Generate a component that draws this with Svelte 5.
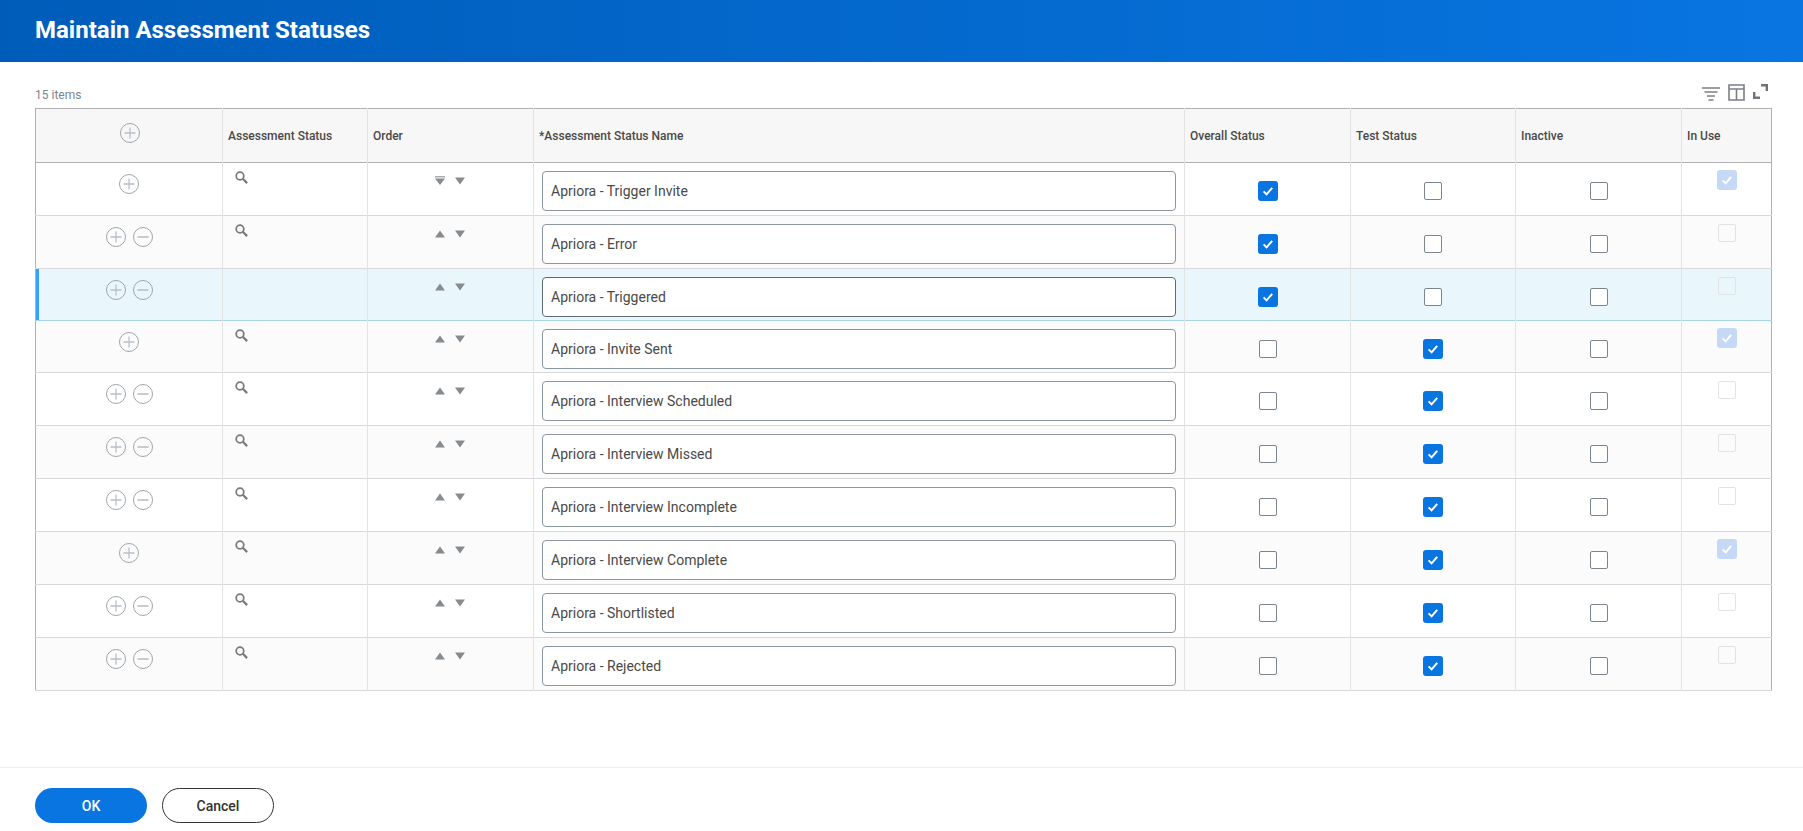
<script lang="ts">
type Row = {
	name: string;
	height: number;
	overall: boolean;
	test: boolean;
	used: boolean;
	search: boolean;
	first?: boolean;
	selected?: boolean;
};

const rows: Row[] = [
	{ name: "Apriora - Trigger Invite", height: 53, overall: true, test: false, used: true, search: true, first: true },
	{ name: "Apriora - Error", height: 53, overall: true, test: false, used: false, search: true },
	{ name: "Apriora - Triggered", height: 52, overall: true, test: false, used: false, search: false, selected: true },
	{ name: "Apriora - Invite Sent", height: 52, overall: false, test: true, used: true, search: true },
	{ name: "Apriora - Interview Scheduled", height: 53, overall: false, test: true, used: false, search: true },
	{ name: "Apriora - Interview Missed", height: 53, overall: false, test: true, used: false, search: true },
	{ name: "Apriora - Interview Incomplete", height: 53, overall: false, test: true, used: false, search: true },
	{ name: "Apriora - Interview Complete", height: 53, overall: false, test: true, used: true, search: true },
	{ name: "Apriora - Shortlisted", height: 53, overall: false, test: true, used: false, search: true },
	{ name: "Apriora - Rejected", height: 53, overall: false, test: true, used: false, search: true },
];
</script>

{#snippet plus()}
	<svg class="round" viewBox="0 0 20 20" width="20" height="20" aria-hidden="true">
		<circle cx="10" cy="10" r="9.5" fill="none" stroke="#a1a5a9" />
		<path d="M10 4.5v11M4.5 10h11" fill="none" stroke="#b9c0c7" stroke-width="1.3" />
	</svg>
{/snippet}

{#snippet minus()}
	<svg class="round" viewBox="0 0 20 20" width="20" height="20" aria-hidden="true">
		<circle cx="10" cy="10" r="9.5" fill="none" stroke="#a1a5a9" />
		<path d="M4.5 10h11" fill="none" stroke="#b9c0c7" stroke-width="1.6" />
	</svg>
{/snippet}

{#snippet check(kind: "on" | "off" | "used" | "blank")}
	{#if kind === "on" || kind === "used"}
		<span class="box {kind}">
			<svg viewBox="0 0 20 20" width="20" height="20" aria-hidden="true">
				<path d="M5.6 10.4l3 3 5.6-6.6" fill="none" stroke="#fff" stroke-width="2" />
			</svg>
		</span>
	{:else}
		<span class="box {kind}"></span>
	{/if}
{/snippet}

<div class="page">
	<header class="banner"><h1>Maintain Assessment Statuses</h1></header>

	<main>
		<div class="toolbar">
			<span class="count">15 items</span>
			<div class="tools">
				<svg class="filter" viewBox="0 0 18 14" width="18" height="14" aria-hidden="true">
					<path d="M0 1h18M2.5 5h13M5 9h8M6.5 13h5" fill="none" stroke="#7b7f84" stroke-width="1.6" />
				</svg>
				<svg viewBox="0 0 17 17" width="17" height="17" aria-hidden="true">
					<path d="M1 1h15v15H1zM1 5h15M8.5 5v11" fill="none" stroke="#7b7f84" stroke-width="1.6" />
				</svg>
				<svg viewBox="0 0 15 15" width="15" height="15" aria-hidden="true">
					<path d="M8 1.2h5.8V7M1.2 8v5.8H7" fill="none" stroke="#6f7378" stroke-width="2.4" />
				</svg>
			</div>
		</div>

		<table>
			<colgroup>
				<col class="c-add" />
				<col class="c-status" />
				<col class="c-order" />
				<col class="c-name" />
				<col class="c-overall" />
				<col class="c-test" />
				<col class="c-inactive" />
				<col class="c-use" />
			</colgroup>
			<thead>
				<tr>
					<th class="add-head">{@render plus()}</th>
					<th>Assessment Status</th>
					<th>Order</th>
					<th>*Assessment Status Name</th>
					<th>Overall Status</th>
					<th>Test Status</th>
					<th>Inactive</th>
					<th>In Use</th>
				</tr>
			</thead>
			<tbody>
				{#each rows as row}
					<tr class:selected={row.selected} style="height: {row.height}px">
						<td class="add">
							<div class="add-icons">
								{@render plus()}
								{#if !row.used}{@render minus()}{/if}
							</div>
						</td>
						<td class="search">
							{#if row.search}
								<svg viewBox="0 0 12 12" width="13" height="13" aria-hidden="true">
									<circle cx="4.6" cy="4.6" r="3.5" fill="none" stroke="#77797c" stroke-width="1.6" />
									<path d="M7.2 7.2l4 4" fill="none" stroke="#77797c" stroke-width="2" />
								</svg>
							{/if}
						</td>
						<td class="order">
							<div class="arrows">
								<svg viewBox="0 0 10 9" width="10" height="9" aria-hidden="true">
									{#if row.first}
										<path d="M0 0h10v1.5H0z" fill="#a9adb1" />
										<path d="M0 2.4h10L5 9z" fill="#868b90" />
									{:else}
										<path d="M5 1.5l5 7H0z" fill="#868b90" />
									{/if}
								</svg>
								<svg viewBox="0 0 10 9" width="10" height="9" aria-hidden="true">
									<path d="M0 1.5h10l-5 7z" fill="#868b90" />
								</svg>
							</div>
						</td>
						<td class="name"><input type="text" value={row.name} readonly /></td>
						<td class="tick">{@render check(row.overall ? "on" : "off")}</td>
						<td class="tick">{@render check(row.test ? "on" : "off")}</td>
						<td class="tick">{@render check("off")}</td>
						<td class="used">{@render check(row.used ? "used" : "blank")}</td>
					</tr>
				{/each}
			</tbody>
		</table>
	</main>

	<footer>
		<button type="button" class="primary">OK</button>
		<button type="button" class="secondary">Cancel</button>
	</footer>
</div>

<style>
	:global(body) {
		margin: 0;
		background: #fff;
		font-family: Roboto, "Liberation Sans", sans-serif;
		color: #333;
	}

	.page {
		display: flex;
		flex-direction: column;
		height: 100vh;
		min-height: 831px;
	}

	.banner {
		display: flex;
		align-items: center;
		height: 62px;
		padding: 0 35px;
		background: linear-gradient(90deg, #005cb9, #0875e1);
		box-sizing: border-box;
	}

	h1 {
		margin: 0 0 3px;
		color: #fff;
		font-size: 24px;
		font-weight: 700;
	}

	main {
		flex: 1;
		padding: 20px 31px 0 35px;
	}

	.toolbar {
		display: flex;
		align-items: flex-end;
		justify-content: space-between;
		height: 19px;
		padding-bottom: 7px;
	}

	.count {
		margin-bottom: -3px;
		color: #7b858f;
		font-size: 12px;
		line-height: 17px;
	}

	.tools {
		display: flex;
		align-items: flex-start;
		gap: 8px;
		margin-right: 4px;
	}

	.filter {
		margin-top: 3px;
	}

	table {
		width: 1736px;
		border-collapse: collapse;
		table-layout: fixed;
		border: 1px solid #b1b1b1;
	}

	.c-add { width: 187px; }
	.c-status { width: 145px; }
	.c-order { width: 166px; }
	.c-name { width: 651px; }
	.c-overall { width: 166px; }
	.c-test { width: 165px; }
	.c-inactive { width: 166px; }
	.c-use { width: 90px; }

	thead tr {
		height: 54px;
		background: #f7f7f7;
		border-bottom: 1px solid #b1b1b1;
	}

	th {
		padding: 0 5px;
		border-left: 1px solid #e3e3e3;
		color: #494949;
		font-size: 12px;
		font-weight: 500;
		text-align: left;
	}

	th.add-head {
		padding: 0 0 5px 2px;
	}

	.add-head .round {
		margin: 0 auto;
	}

	.round {
		display: block;
	}

	tbody tr {
		background: #fff;
		border-bottom: 1px solid #d8d8d8;
	}

	tbody tr:nth-child(even) {
		background: #fbfbfb;
	}

	tbody tr.selected {
		background: #e9f7fd;
		border-top: 1px solid #a6d3e6;
		border-bottom: 1px solid #a6d3e6;
	}

	td {
		padding: 0;
		border-left: 1px solid #e3e3e3;
		vertical-align: top;
		box-sizing: border-box;
	}

	td:first-child,
	th:first-child {
		border-left: 0;
	}

	tr.selected td.add {
		box-shadow: inset 3px 0 0 #36a3fb;
	}

	.add-icons {
		display: flex;
		justify-content: center;
		gap: 7px;
		padding-top: 11px;
	}

	td.search {
		padding: 8px 0 0 12px;
	}

	td.search svg {
		display: block;
	}

	.arrows {
		display: flex;
		justify-content: center;
		gap: 10px;
		padding: 13px 2px 0 0;
	}

	.arrows svg {
		display: block;
	}

	td.name {
		padding: 8px 8px 3px 8px;
	}

	input {
		display: block;
		width: 100%;
		height: 40px;
		padding: 0 8px;
		border: 1px solid #8c96a0;
		border-radius: 4px;
		background: #fff;
		box-sizing: border-box;
		color: #494949;
		font-family: inherit;
		font-size: 14px;
		outline: none;
	}

	tr.selected input {
		border-color: #5e6a75;
	}

	td.tick {
		padding-top: 18px;
		text-align: center;
	}

	td.used {
		padding-top: 7px;
		text-align: center;
	}

	.box {
		display: inline-block;
		box-sizing: border-box;
		vertical-align: top;
		border-radius: 3px;
	}

	.box svg {
		display: block;
	}

	.box.on,
	.box.used {
		width: 20px;
		height: 20px;
		background: #0875e1;
	}

	.box.used {
		background: #c5d8f6;
	}

	.box.off {
		width: 18px;
		height: 18px;
		margin-top: 1px;
		border: 1px solid #7b858f;
		border-radius: 2px;
		background: #fff;
	}

	.box.blank {
		width: 18px;
		height: 18px;
		margin-top: 1px;
		border: 1px solid #e3e3e3;
		border-radius: 2px;
		background: transparent;
	}

	footer {
		display: flex;
		gap: 15px;
		height: 64px;
		padding: 20px 35px 0;
		border-top: 1px solid #eee;
		box-sizing: border-box;
	}

	button {
		width: 112px;
		height: 35px;
		border-radius: 999px;
		font-family: inherit;
		font-size: 14px;
		font-weight: 500;
	}

	.primary {
		border: 0;
		background: #0875e1;
		color: #fff;
	}

	.secondary {
		border: 1px solid #333;
		background: #fff;
		color: #333;
	}
</style>
